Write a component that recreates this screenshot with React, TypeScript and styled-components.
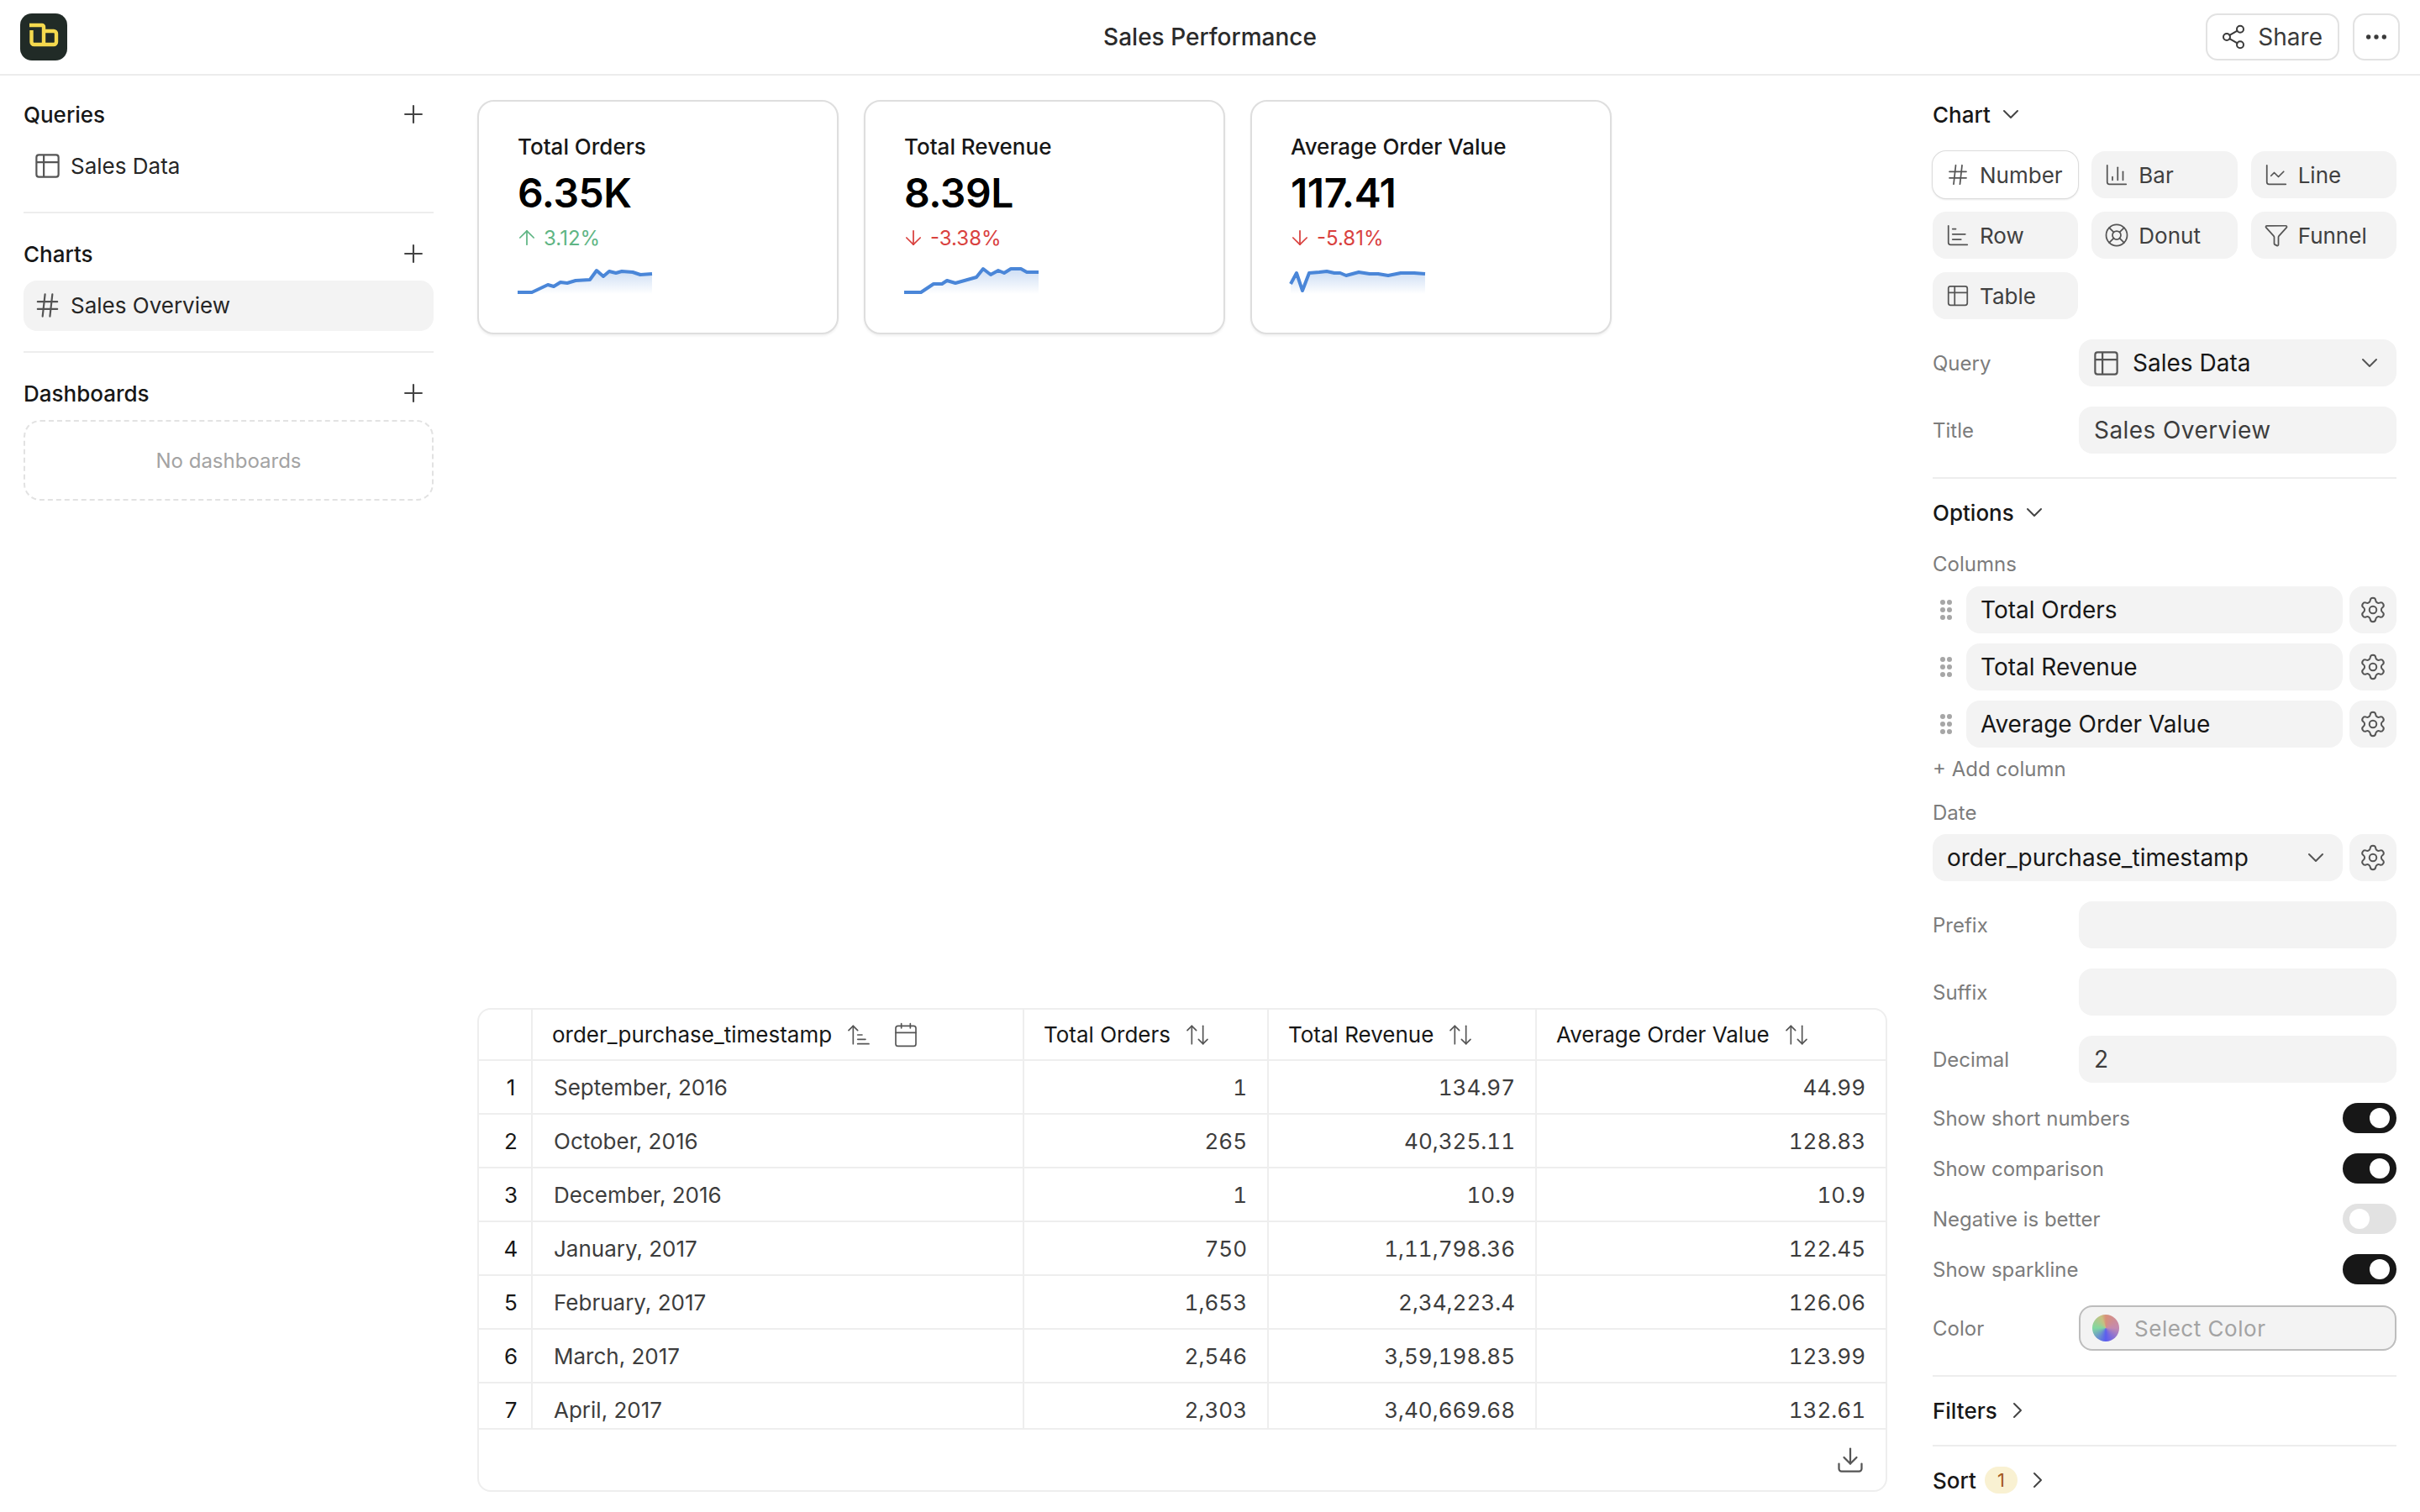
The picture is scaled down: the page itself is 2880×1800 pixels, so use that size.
import React from "react";
import styled, { createGlobalStyle } from "styled-components";
import {
  ArrowDown,
  ArrowUp,
  ArrowUpDown,
  ArrowUpNarrowWide,
  Calendar,
  ChartBar,
  ChartColumn,
  ChartLine,
  ChevronDown,
  ChevronRight,
  Download,
  Ellipsis,
  Filter,
  Hash,
  LifeBuoy,
  Plus,
  Settings,
  Share2,
  Table2,
} from "lucide-react";

const GlobalStyle = createGlobalStyle`
  * {
    box-sizing: border-box;
  }
  html, body {
    margin: 0;
    padding: 0;
    background: #fff;
    overflow: hidden;
  }
  body {
    font-family: Inter, "Liberation Sans", sans-serif;
    color: #171717;
    -webkit-font-smoothing: antialiased;
  }
`;

const Page = styled.div`
  width: 2880px;
  height: 1800px;
  display: flex;
  flex-direction: column;
  overflow: hidden;
`;

const Header = styled.header`
  height: 90px;
  flex: none;
  display: grid;
  grid-template-columns: 1fr auto 1fr;
  align-items: center;
  padding: 0 24px;
  border-bottom: 2px solid #ececec;
`;

const Logo = styled.div`
  width: 56px;
  height: 56px;
  border-radius: 14px;
  background: #212b27;
  display: flex;
`;

const PageTitle = styled.h1`
  margin: 0;
  font-size: 28px;
  font-weight: 500;
  color: #2b2b2b;
`;

const HeaderActions = styled.div`
  display: flex;
  justify-content: flex-end;
  gap: 16px;
`;

const OutlineButton = styled.button<{ $wide?: boolean }>`
  height: 56px;
  min-width: 56px;
  padding: ${(p) => (p.$wide ? "0 18px 0 15px" : "0")};
  display: flex;
  align-items: center;
  justify-content: center;
  gap: 13px;
  border: 2px solid #e2e2e2;
  border-radius: 14px;
  background: #fff;
  font: 400 28px Inter, sans-serif;
  color: #3a3a3a;
`;

const Main = styled.main`
  flex: 1;
  min-height: 0;
  display: flex;
`;

const Sidebar = styled.aside`
  width: 544px;
  flex: none;
  padding: 18px 28px 0;
  display: flex;
  flex-direction: column;
`;

const SidebarSection = styled.section`
  display: flex;
  flex-direction: column;
  gap: 4px;
`;

const SidebarHeading = styled.div`
  height: 56px;
  display: flex;
  align-items: center;
  justify-content: space-between;
  padding-right: 7px;
  font-size: 26px;
  font-weight: 500;
  color: #171717;
  svg {
    color: #444;
  }
`;

const SidebarItem = styled.div<{ $active?: boolean }>`
  height: 60px;
  display: flex;
  align-items: center;
  gap: 10px;
  padding: 0 0 2px 11px;
  border-radius: 16px;
  font-size: 26px;
  color: #262626;
  background: ${(p) => (p.$active ? "#f3f3f3" : "transparent")};
  svg {
    color: #555;
  }
`;

const SidebarRule = styled.hr`
  margin: 24px 0 20px;
  border: 0;
  height: 2px;
  background: #ededed;
`;

const EmptyBox = styled.div`
  height: 96px;
  display: flex;
  align-items: center;
  justify-content: center;
  border: 2px dashed #e2e2e2;
  border-radius: 20px;
  font-size: 24px;
  color: #a3a3a3;
`;

const Center = styled.div`
  flex: 1;
  min-width: 0;
  padding: 29px 26px 24px 24px;
  display: flex;
  flex-direction: column;
  justify-content: space-between;
`;

const CardRow = styled.div`
  display: flex;
  gap: 30px;
`;

const Card = styled.div`
  width: 430px;
  height: 279px;
  padding: 38px 46px 0;
  border: 2px solid #dedede;
  border-radius: 20px;
  background: #fff;
  box-shadow: 0 2px 3px rgba(0, 0, 0, 0.06);
`;

const CardTitle = styled.div`
  font-size: 26px;
  line-height: 32px;
  font-weight: 500;
  color: #171717;
`;

const CardValue = styled.div`
  margin-top: 5px;
  font-size: 48px;
  line-height: 68px;
  font-weight: 600;
  color: #000;
  letter-spacing: -0.01em;
`;

const CardChange = styled.div<{ $up: boolean }>`
  margin-top: 1px;
  display: flex;
  align-items: center;
  gap: 6px;
  height: 36px;
  font-size: 24px;
  color: ${(p) => (p.$up ? "#5fb584" : "#d9413e")};
  svg {
    margin-left: -3px;
  }
`;

const Spark = styled.svg`
  display: block;
  margin-top: 19px;
  overflow: visible;
`;

const TablePanel = styled.div`
  height: 576px;
  display: flex;
  flex-direction: column;
  border: 2px solid #eeeeee;
  border-radius: 16px;
  overflow: hidden;
`;

const TableScroll = styled.div`
  height: 500px;
  flex: none;
  overflow: hidden;
  border-bottom: 2px solid #eeeeee;
`;

const DataTable = styled.table`
  width: 100%;
  table-layout: fixed;
  border-collapse: separate;
  border-spacing: 0;
  font-size: 26px;
`;

const HeadCell = styled.th`
  height: 61px;
  padding: 0 23px;
  text-align: left;
  font-weight: 400;
  color: #171717;
  border-right: 2px solid #eeeeee;
  border-bottom: 2px solid #eeeeee;
  white-space: nowrap;
  &:last-child {
    border-right: 0;
  }
`;

const HeadInner = styled.div`
  display: flex;
  align-items: center;
  gap: 16px;
  svg {
    color: #555;
    flex: none;
  }
  svg + svg {
    margin-left: 8px;
  }
`;

const BodyCell = styled.td<{ $kind: "index" | "text" | "number" }>`
  height: 64px;
  padding: ${(p) =>
    p.$kind === "index" ? "0 0 0 14px" : p.$kind === "text" ? "0 25px" : "0 24px"};
  text-align: ${(p) => (p.$kind === "text" ? "left" : p.$kind === "index" ? "center" : "right")};
  color: ${(p) => (p.$kind === "index" ? "#171717" : "#3d3d3d")};
  border-right: 2px solid #eeeeee;
  border-bottom: 2px solid #eeeeee;
  font-variant-numeric: ${(p) => (p.$kind === "number" ? "tabular-nums" : "normal")};
  white-space: nowrap;
  &:last-child {
    border-right: 0;
  }
`;

const TableFooter = styled.div`
  flex: 1;
  display: flex;
  align-items: center;
  justify-content: flex-end;
  padding-right: 24px;
  svg {
    color: #555;
  }
`;

const Panel = styled.aside`
  width: 608px;
  flex: none;
  padding: 18px 28px 0;
  display: flex;
  flex-direction: column;
  overflow: hidden;
`;

const PanelHeading = styled.div`
  height: 56px;
  flex: none;
  display: flex;
  align-items: center;
  gap: 8px;
  font-size: 26px;
  font-weight: 500;
  color: #171717;
  svg {
    color: #444;
  }
`;

const TypeGrid = styled.div`
  margin: 16px 0 24px;
  display: grid;
  grid-template-columns: repeat(3, 1fr);
  gap: 16px;
`;

const TypeButton = styled.div<{ $active?: boolean }>`
  height: 56px;
  display: flex;
  align-items: center;
  gap: 11px;
  padding-left: 15px;
  border-radius: 16px;
  font-size: 26px;
  color: #404040;
  background: ${(p) => (p.$active ? "#fff" : "#f3f3f3")};
  box-shadow: ${(p) =>
    p.$active ? "0 0 0 1px #dcdcdc, 0 1px 3px rgba(0, 0, 0, 0.18)" : "none"};
  svg {
    color: #555;
    flex: none;
  }
`;

const FieldRow = styled.div`
  height: 56px;
  margin-bottom: 24px;
  flex: none;
  display: grid;
  grid-template-columns: 174px 1fr;
  align-items: center;
`;

const FieldLabel = styled.div`
  font-size: 24px;
  color: #7c7c7c;
`;

const FieldBox = styled.div`
  height: 56px;
  display: flex;
  align-items: center;
  padding: 0 18px;
  border-radius: 16px;
  background: #f3f3f3;
  font-size: 28px;
  letter-spacing: 0.015em;
  color: #3d3d3d;
`;

const SelectBox = styled(FieldBox)`
  padding: 0 16px 0 15px;
  gap: 14px;
  letter-spacing: 0;
  color: #171717;
  span {
    flex: 1;
  }
  svg {
    flex: none;
    color: #555;
  }
`;

const PanelRule = styled.hr<{ $top: number }>`
  margin: ${(p) => p.$top}px 0 12px;
  flex: none;
  width: 100%;
  border: 0;
  height: 2px;
  background: #ededed;
`;

const ColumnsLabel = styled(FieldLabel)`
  height: 32px;
  line-height: 32px;
  margin-top: 18px;
  margin-bottom: 10px;
`;

const ColumnRow = styled.div`
  display: grid;
  grid-template-columns: 32px 1fr 56px;
  column-gap: 8px;
  margin-bottom: 12px;
  height: 56px;
  flex: none;
`;

const Grip = styled.div`
  display: flex;
  align-items: center;
  justify-content: center;
`;

const ColumnField = styled(FieldBox)`
  padding: 0 16px 0 17px;
  letter-spacing: 0;
  color: #171717;
  justify-content: space-between;
  svg {
    flex: none;
    color: #555;
  }
`;

const GearButton = styled.div`
  height: 56px;
  border-radius: 16px;
  background: #f3f3f3;
  display: flex;
  align-items: center;
  justify-content: center;
  svg {
    color: #555;
  }
`;

const AddColumn = styled.div`
  height: 32px;
  line-height: 32px;
  margin-top: -2px;
  font-size: 24px;
  color: #7c7c7c;
`;

const DateLabel = styled(FieldLabel)`
  height: 32px;
  line-height: 32px;
  margin-top: 20px;
  margin-bottom: 9px;
`;

const DateRow = styled.div`
  display: grid;
  grid-template-columns: 1fr 56px;
  column-gap: 8px;
  height: 56px;
  flex: none;
  margin-bottom: 24px;
`;

const ToggleRow = styled.div`
  height: 36px;
  margin-bottom: 24px;
  flex: none;
  display: flex;
  align-items: center;
  justify-content: space-between;
`;

const Toggle = styled.div<{ $on: boolean }>`
  width: 64px;
  height: 36px;
  padding: 6px 8px;
  border-radius: 18px;
  display: flex;
  justify-content: ${(p) => (p.$on ? "flex-end" : "flex-start")};
  background: ${(p) => (p.$on ? "#171717" : "#e2e2e2")};
  &::after {
    content: "";
    width: 24px;
    height: 24px;
    border-radius: 50%;
    background: #fff;
  }
`;

const ColorBox = styled(FieldBox)`
  height: 54px;
  padding: 0 14px;
  gap: 18px;
  border: 2px solid #bdbdbd;
  color: #a3a3a3;
  font-size: 26px;
  letter-spacing: 0.02em;
`;

const Swatch = styled.span`
  width: 32px;
  height: 32px;
  border-radius: 50%;
  flex: none;
  background: conic-gradient(#d8907a, #c48ab0 90deg, #5a5cf0 180deg, #80d8a0 270deg, #c8c080 340deg, #d8907a);
`;

const CountBadge = styled.span`
  width: 39px;
  height: 32px;
  margin-left: 2px;
  border-radius: 16px;
  display: flex;
  align-items: center;
  justify-content: center;
  background: #f9f1d2;
  color: #a35a1d;
  font-size: 22px;
  font-weight: 400;
`;

const cards = [
  {
    title: "Total Orders",
    value: "6.35K",
    change: "3.12%",
    up: true,
    points: "0,28 17,28 36,19 43,21 51,16 59,17 69,14 86,13 94,2 102,9 109,3 117,5 124,3 137,4 146,7 160,6",
  },
  {
    title: "Total Revenue",
    value: "8.39L",
    change: "-3.38%",
    up: false,
    points: "0,28 20,28 35,18 45,18 51,14 61,17 86,10 94,0 103,7 112,2 119,5 127,0 139,0 146,4 160,4",
  },
  {
    title: "Average Order Value",
    value: "117.41",
    change: "-5.81%",
    up: false,
    points: "0,18 7,5 14,26 22,5 34,4 43,3 52,5 59,5 66,8 81,4 94,6 104,6 116,8 131,5 147,5 160,6",
  },
];

const rows = [
  ["September, 2016", "1", "134.97", "44.99"],
  ["October, 2016", "265", "40,325.11", "128.83"],
  ["December, 2016", "1", "10.9", "10.9"],
  ["January, 2017", "750", "1,11,798.36", "122.45"],
  ["February, 2017", "1,653", "2,34,223.4", "126.06"],
  ["March, 2017", "2,546", "3,59,198.85", "123.99"],
  ["April, 2017", "2,303", "3,40,669.68", "132.61"],
];

const types = [
  { label: "Number", icon: Hash, active: true },
  { label: "Bar", icon: ChartColumn },
  { label: "Line", icon: ChartLine },
  { label: "Row", icon: ChartBar },
  { label: "Donut", icon: LifeBuoy },
  { label: "Funnel", icon: Filter },
  { label: "Table", icon: Table2 },
];

const thin = { strokeWidth: 1.5 };

function Sparkline({ id, points }: { id: string; points: string }) {
  return (
    <Spark width="160" height="30" viewBox="0 0 160 30">
      <defs>
        <linearGradient id={id} x1="0" y1="0" x2="0" y2="1">
          <stop offset="0" stopColor="#4a86d8" stopOpacity="0.28" />
          <stop offset="1" stopColor="#4a86d8" stopOpacity="0" />
        </linearGradient>
      </defs>
      <polygon points={`0,30 ${points} 160,30`} fill={`url(#${id})`} />
      <polyline points={points} fill="none" stroke="#4a86d8" strokeWidth="4" strokeLinejoin="round" />
    </Spark>
  );
}

function GripDots() {
  return (
    <svg width="14" height="24" viewBox="0 0 14 24" fill="#a6a6a6">
      {[3, 12, 21].map((y) => (
        <React.Fragment key={y}>
          <circle cx="3" cy={y} r="3" />
          <circle cx="11" cy={y} r="3" />
        </React.Fragment>
      ))}
    </svg>
  );
}

export default function App() {
  return (
    <Page>
      <GlobalStyle />
      <Header>
        <Logo>
          <svg width="56" height="56" viewBox="0 0 56 56" fill="none" stroke="#f5d94e" strokeWidth="4.4">
            <path d="M11 14H26a2 2 0 0 1 2 2V37" />
            <path d="M13.5 20V34a3 3 0 0 0 3 3H40a3 3 0 0 0 3-3V24a3 3 0 0 0-3-3H28" />
          </svg>
        </Logo>
        <PageTitle>Sales Performance</PageTitle>
        <HeaderActions>
          <OutlineButton $wide>
            <Share2 size={32} {...thin} />
            Share
          </OutlineButton>
          <OutlineButton>
            <Ellipsis size={32} strokeWidth={2} />
          </OutlineButton>
        </HeaderActions>
      </Header>
      <Main>
        <Sidebar>
          <SidebarSection>
            <SidebarHeading>
              Queries
              <Plus size={34} {...thin} />
            </SidebarHeading>
            <SidebarItem>
              <Table2 size={35} {...thin} />
              Sales Data
            </SidebarItem>
          </SidebarSection>
          <SidebarRule />
          <SidebarSection>
            <SidebarHeading>
              Charts
              <Plus size={34} {...thin} />
            </SidebarHeading>
            <SidebarItem $active>
              <Hash size={35} {...thin} />
              Sales Overview
            </SidebarItem>
          </SidebarSection>
          <SidebarRule />
          <SidebarSection>
            <SidebarHeading>
              Dashboards
              <Plus size={34} {...thin} />
            </SidebarHeading>
            <EmptyBox>No dashboards</EmptyBox>
          </SidebarSection>
        </Sidebar>
        <Center>
          <CardRow>
            {cards.map((c, i) => (
              <Card key={c.title}>
                <CardTitle>{c.title}</CardTitle>
                <CardValue>{c.value}</CardValue>
                <CardChange $up={c.up}>
                  {c.up ? <ArrowUp size={28} {...thin} /> : <ArrowDown size={28} {...thin} />}
                  {c.change}
                </CardChange>
                <Sparkline id={`spark-${i}`} points={c.points} />
              </Card>
            ))}
          </CardRow>
          <TablePanel>
            <TableScroll>
              <DataTable>
                <colgroup>
                  <col style={{ width: 64 }} />
                  <col style={{ width: 585 }} />
                  <col style={{ width: 291 }} />
                  <col style={{ width: 319 }} />
                  <col />
                </colgroup>
                <thead>
                  <tr>
                    <HeadCell />
                    <HeadCell>
                      <HeadInner>
                        order_purchase_timestamp
                        <ArrowUpNarrowWide size={32} strokeWidth={1.25} />
                        <Calendar size={32} strokeWidth={1.25} />
                      </HeadInner>
                    </HeadCell>
                    <HeadCell>
                      <HeadInner>
                        Total Orders
                        <ArrowUpDown size={32} strokeWidth={1.25} />
                      </HeadInner>
                    </HeadCell>
                    <HeadCell>
                      <HeadInner>
                        Total Revenue
                        <ArrowUpDown size={32} strokeWidth={1.25} />
                      </HeadInner>
                    </HeadCell>
                    <HeadCell>
                      <HeadInner>
                        Average Order Value
                        <ArrowUpDown size={32} strokeWidth={1.25} />
                      </HeadInner>
                    </HeadCell>
                  </tr>
                </thead>
                <tbody>
                  {rows.map((r, i) => (
                    <tr key={r[0]}>
                      <BodyCell $kind="index">{i + 1}</BodyCell>
                      <BodyCell $kind="text">{r[0]}</BodyCell>
                      <BodyCell $kind="number">{r[1]}</BodyCell>
                      <BodyCell $kind="number">{r[2]}</BodyCell>
                      <BodyCell $kind="number">{r[3]}</BodyCell>
                    </tr>
                  ))}
                </tbody>
              </DataTable>
            </TableScroll>
            <TableFooter>
              <Download size={36} {...thin} />
            </TableFooter>
          </TablePanel>
        </Center>
        <Panel>
          <PanelHeading>
            Chart
            <ChevronDown size={32} {...thin} />
          </PanelHeading>
          <TypeGrid>
            {types.map((t) => (
              <TypeButton key={t.label} $active={t.active}>
                <t.icon size={30} strokeWidth={1.4} />
                {t.label}
              </TypeButton>
            ))}
          </TypeGrid>
          <FieldRow>
            <FieldLabel>Query</FieldLabel>
            <SelectBox>
              <Table2 size={35} {...thin} />
              <span>Sales Data</span>
              <ChevronDown size={32} {...thin} />
            </SelectBox>
          </FieldRow>
          <FieldRow>
            <FieldLabel>Title</FieldLabel>
            <FieldBox>Sales Overview</FieldBox>
          </FieldRow>
          <PanelRule $top={4} />
          <PanelHeading>
            Options
            <ChevronDown size={32} {...thin} />
          </PanelHeading>
          <ColumnsLabel>Columns</ColumnsLabel>
          {["Total Orders", "Total Revenue", "Average Order Value"].map((c) => (
            <ColumnRow key={c}>
              <Grip>
                <GripDots />
              </Grip>
              <ColumnField>{c}</ColumnField>
              <GearButton>
                <Settings size={34} strokeWidth={1.4} />
              </GearButton>
            </ColumnRow>
          ))}
          <AddColumn>+ Add column</AddColumn>
          <DateLabel>Date</DateLabel>
          <DateRow>
            <ColumnField>
              order_purchase_timestamp
              <ChevronDown size={32} {...thin} />
            </ColumnField>
            <GearButton>
              <Settings size={34} strokeWidth={1.4} />
            </GearButton>
          </DateRow>
          <FieldRow>
            <FieldLabel>Prefix</FieldLabel>
            <FieldBox />
          </FieldRow>
          <FieldRow>
            <FieldLabel>Suffix</FieldLabel>
            <FieldBox />
          </FieldRow>
          <FieldRow>
            <FieldLabel>Decimal</FieldLabel>
            <FieldBox>2</FieldBox>
          </FieldRow>
          <ToggleRow>
            <FieldLabel>Show short numbers</FieldLabel>
            <Toggle $on />
          </ToggleRow>
          <ToggleRow>
            <FieldLabel>Show comparison</FieldLabel>
            <Toggle $on />
          </ToggleRow>
          <ToggleRow>
            <FieldLabel>Negative is better</FieldLabel>
            <Toggle $on={false} />
          </ToggleRow>
          <ToggleRow>
            <FieldLabel>Show sparkline</FieldLabel>
            <Toggle $on />
          </ToggleRow>
          <FieldRow>
            <FieldLabel>Color</FieldLabel>
            <ColorBox>
              <Swatch />
              Select Color
            </ColorBox>
          </FieldRow>
          <PanelRule $top={4} />
          <PanelHeading>
            Filters
            <ChevronRight size={32} {...thin} />
          </PanelHeading>
          <PanelRule $top={13} />
          <PanelHeading>
            Sort
            <CountBadge>1</CountBadge>
            <ChevronRight size={32} {...thin} />
          </PanelHeading>
        </Panel>
      </Main>
    </Page>
  );
}
